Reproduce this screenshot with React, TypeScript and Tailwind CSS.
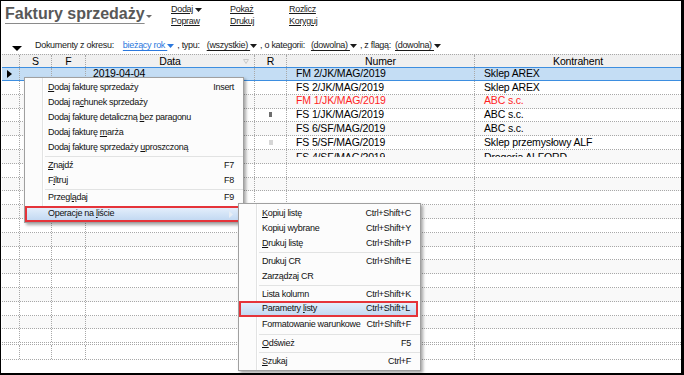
import React from "react";

const FONT = "font-['Liberation_Sans',Arial,sans-serif]";
const SMALL = "text-[9px] tracking-[-0.3px]";

function Label({ text }: { text: string }) {
  const i = text.indexOf("&");
  if (i < 0) return <span>{text}</span>;
  return (
    <span>
      {text.slice(0, i)}
      <span className="underline underline-offset-[1px]">{text.charAt(i + 1)}</span>
      {text.slice(i + 2)}
    </span>
  );
}

const Tri = ({ className = "" }: { className?: string }) => (
  <svg width="7" height="4" viewBox="0 0 7 4" className={className}>
    <path d="M0 0H7L3.5 4Z" fill="currentColor" />
  </svg>
);

type MItem = { t: "item"; label: string; sc?: string; hl?: boolean; sub?: boolean } | { t: "sep"; h: number };

function Menu({ items, className }: { items: MItem[]; className: string }) {
  return (
    <div
      className={`absolute bg-[#fcfcfc] border border-[#a0a0a0] shadow-[2px_2px_3px_rgba(0,0,0,0.35)] pt-[2px] whitespace-nowrap ${SMALL} text-[#111] ${className}`}
    >
      <div className="absolute left-[17px] top-0 bottom-0 w-px bg-[#e2e3e3]" />
      <div className="absolute left-[18px] top-0 bottom-0 w-px bg-white" />
      {items.map((it, idx) =>
        it.t === "sep" ? (
          <div key={idx} className="relative flex items-center pl-[20px]" style={{ height: it.h }}>
            <div className="h-px w-full bg-[#e2e3e3]" />
          </div>
        ) : it.hl ? (
          <div
            key={idx}
            className="relative flex h-[16px] items-center justify-between border-2 border-[#e5343a] bg-gradient-to-b from-[#e3eefb] to-[#c3d9f2] pl-[21px] pr-[6px] mr-[2px] -mt-px"
          >
            <Label text={it.label} />
            {it.sc ? <span>{it.sc}</span> : null}
            {it.sub ? (
              <svg width="4" height="7" viewBox="0 0 4 7">
                <path d="M0 0L4 3.5L0 7Z" fill="#e8eef5" />
              </svg>
            ) : null}
          </div>
        ) : (
          <div key={idx} className="relative flex h-[15px] items-center justify-between pl-[23px] pr-[9px]">
            <Label text={it.label} />
            {it.sc ? <span>{it.sc}</span> : null}
          </div>
        )
      )}
    </div>
  );
}

const menu1: MItem[] = [
  { t: "item", label: "&Dodaj fakturę sprzedaży", sc: "Insert" },
  { t: "item", label: "Dodaj ra&chunek sprzedaży" },
  { t: "item", label: "Dodaj fakturę detaliczną &bez paragonu" },
  { t: "item", label: "Dodaj fakturę &marża" },
  { t: "item", label: "Dodaj fakturę sprzedaży &uproszczoną" },
  { t: "sep", h: 3 },
  { t: "item", label: "&Znajdź", sc: "F7" },
  { t: "item", label: "F&iltruj", sc: "F8" },
  { t: "sep", h: 2 },
  { t: "item", label: "Przegl&ądaj", sc: "F9" },
  { t: "sep", h: 2 },
  { t: "item", label: "Operacje na &liście", hl: true, sub: true },
];

const menu2: MItem[] = [
  { t: "item", label: "&Kopiuj listę", sc: "Ctrl+Shift+C" },
  { t: "item", label: "Kopiuj wybrane", sc: "Ctrl+Shift+Y" },
  { t: "item", label: "&Drukuj listę", sc: "Ctrl+Shift+P" },
  { t: "sep", h: 3 },
  { t: "item", label: "Drukuj CR", sc: "Ctrl+Shift+E" },
  { t: "item", label: "Zarządzaj CR" },
  { t: "sep", h: 3 },
  { t: "item", label: "Lista kolumn", sc: "Ctrl+Shift+K" },
  { t: "item", label: "Parametry &listy", sc: "Ctrl+Shift+L", hl: true },
  { t: "item", label: "Formatowanie warunkowe", sc: "Ctrl+Shift+F" },
  { t: "sep", h: 4 },
  { t: "item", label: "&Odśwież", sc: "F5" },
  { t: "sep", h: 3 },
  { t: "item", label: "&Szukaj", sc: "Ctrl+F" },
];

const W = ["w-[18px]", "w-[32px]", "w-[34px]", "w-[169px]", "w-[32px]", "w-[188px]", "w-[206px]"];

type RowData = { date?: string; num?: string; kon?: string; red?: boolean; r?: "dark" | "light"; clip?: boolean };

const rows: RowData[] = [
  { num: "FS 2/JK/MAG/2019", kon: "Sklep AREX" },
  { num: "FM 1/JK/MAG/2019", kon: "ABC s.c.", red: true },
  { num: "FS 1/JK/MAG/2019", kon: "ABC s.c.", r: "dark" },
  { num: "FS 6/SF/MAG/2019", kon: "ABC s.c." },
  { num: "FS 5/SF/MAG/2019", kon: "Sklep przemysłowy ALF", r: "light" },
  { num: "FS 4/SF/MAG/2019", kon: "Drogeria ALFORD", clip: true },
];

function Cell({ w, last, children, className = "" }: { w: string; last?: boolean; children?: React.ReactNode; className?: string }) {
  return (
    <div className={`${w} shrink-0 h-full flex items-center ${last ? "" : "border-r border-dotted border-[#a8a8a8]"} ${className}`}>
      {children}
    </div>
  );
}

function Txt({ row, children }: { row: RowData; children: React.ReactNode }) {
  if (row.clip)
    return (
      <div className="h-full pt-[1px] overflow-hidden">
        <div className="h-[6px] overflow-hidden leading-[13px]">{children}</div>
      </div>
    );
  return <span>{children}</span>;
}

export default function App() {
  const empty: RowData[] = Array.from({ length: 13 }, () => ({}));
  const allRows = [...rows, ...empty];
  return (
    <div className={`relative w-[684px] h-[375px] overflow-hidden bg-white border-t border-l border-r-[3px] border-b-[2px] border-black whitespace-nowrap ${FONT}`}>
      {/* Top bar */}
      <div className="flex h-[37px]">
        <div className="ml-[4px] w-[166px] pt-[3px] flex items-start">
          <span className="font-bold text-[16px] leading-[20px] text-[#585858] underline decoration-[#8a8a8a] underline-offset-[4px]">
            Faktury sprzedaży
          </span>
          <svg width="6" height="3" viewBox="0 0 6 3" className="mt-[11px] ml-[1px]">
            <path d="M0 0H6L3 3Z" fill="#6a6a6a" />
          </svg>
        </div>
        {[
          ["Dodaj", "Popraw"],
          ["Pokaż", "Drukuj"],
          ["Rozlicz", "Koryguj"],
        ].map(([a, b], i) => (
          <div key={i} className={`w-[59px] pt-[2px] flex flex-col items-start ${SMALL} leading-[12px] text-[#1a1a1a]`}>
            <span className="underline underline-offset-[1px] flex items-center">
              {a}
              {i === 0 ? <Tri className="ml-[2px] mt-[1px]" /> : null}
            </span>
            <span className="underline underline-offset-[1px]">{b}</span>
          </div>
        ))}
      </div>
      {/* Filter row */}
      <div className={`flex h-[16px] items-center ${SMALL} text-[#1a1a1a] whitespace-pre`}>
        <svg width="10" height="5" viewBox="0 0 10 5" className="ml-[11px] mr-[13px] mt-[5px]">
          <path d="M0 0H10L5 5Z" fill="#000" />
        </svg>
        <span>Dokumenty z okresu:</span>
        <span className="ml-[9px] text-[#2b78dd] underline underline-offset-[2px] flex items-center">
          bieżący rok <Tri />
        </span>
        <span className="ml-[3px]">, typu:</span>
        <span className="ml-[7px] underline underline-offset-[2px] flex items-center">
          (wszystkie) <Tri />
        </span>
        <span className="ml-[3px]">, o kategorii:</span>
        <span className="ml-[6px] underline underline-offset-[2px] flex items-center">
          (dowolna) <Tri />
        </span>
        <span className="ml-[3px]">, z flagą:</span>
        <span className="ml-[4px] underline underline-offset-[2px] flex items-center">
          (dowolna) <Tri />
        </span>
      </div>
      {/* Grid */}
      <div className="ml-[1px] w-[679px] text-[10.5px] tracking-[-0.15px] text-black">
        <div className="flex h-[13px] border-t border-dotted border-[#a8a8a8] bg-[#f0f0f0] leading-none">
          <Cell w={W[0]} />
          <Cell w={W[1]} className="justify-center">S</Cell>
          <Cell w={W[2]} className="justify-center">F</Cell>
          <Cell w={W[3]} className="justify-center relative">
            Data
            <svg width="6" height="5" viewBox="0 0 6 5" className="absolute right-[5px] top-[4px]">
              <path d="M0.5 0.5H5.5L3 4.5Z" fill="none" stroke="#c8c8c8" strokeWidth="1" />
            </svg>
          </Cell>
          <Cell w={W[4]} className="justify-center">R</Cell>
          <Cell w={W[5]} className="justify-center">Numer</Cell>
          <Cell w={W[6]} last className="justify-center">Kontrahent</Cell>
        </div>
        {/* selected row */}
        <div className="flex h-[14px] border-y border-[#3d8ee0] bg-[#c4ddf4]">
          <Cell w={W[0]} className="pl-[5px]">
            <svg width="5" height="8" viewBox="0 0 5 8">
              <path d="M0 0L5 4L0 8Z" fill="#000" />
            </svg>
          </Cell>
          <Cell w={W[1]} />
          <Cell w={W[2]} />
          <Cell w={W[3]} className="pl-[7px]">2019-04-04</Cell>
          <Cell w={W[4]} />
          <Cell w={W[5]} className="pl-[9px]">FM 2/JK/MAG/2019</Cell>
          <Cell w={W[6]} last className="pl-[9px]">Sklep AREX</Cell>
        </div>
        {allRows.map((r, i) => (
          <div
            key={i}
            className={`flex h-[13.8px] border-b border-dotted border-[#a8a8a8] ${i % 2 === 0 ? "bg-white" : "bg-[#f9f9f9]"} ${r.red ? "text-[#ff1f1f]" : ""}`}
          >
            <Cell w={W[0]} />
            <Cell w={W[1]} />
            <Cell w={W[2]} />
            <Cell w={W[3]} />
            <Cell w={W[4]} className="pl-[14px]">
              {r.r === "dark" ? <div className="w-[3px] h-[5px] bg-[#6e6e6e]" /> : null}
              {r.r === "light" ? <div className="w-[4px] h-[5px] bg-[#d6d6d6]" /> : null}
            </Cell>
            <Cell w={W[5]} className={`pl-[9px] ${r.clip ? "items-start" : ""}`}>
              {r.num ? <Txt row={r}>{r.num}</Txt> : null}
            </Cell>
            <Cell w={W[6]} last className={`pl-[9px] ${r.clip ? "items-start" : ""}`}>
              {r.kon ? <Txt row={r}>{r.kon}</Txt> : null}
            </Cell>
          </div>
        ))}
        <div className="flex h-[16px] mt-px border-t border-b border-dotted border-[#a8a8a8]">
          <Cell w={W[0]} />
          <Cell w={W[1]} />
          <Cell w={W[2]} />
          <Cell w={W[3]} />
          <Cell w={W[4]} />
          <Cell w={W[5]} />
          <Cell w={W[6]} last />
        </div>
      </div>

      <Menu items={menu1} className="left-[23px] top-[76px] w-[220px]" />
      <Menu items={menu2} className="left-[237px] top-[202px] w-[183px] pb-[1px]" />
    </div>
  );
}
